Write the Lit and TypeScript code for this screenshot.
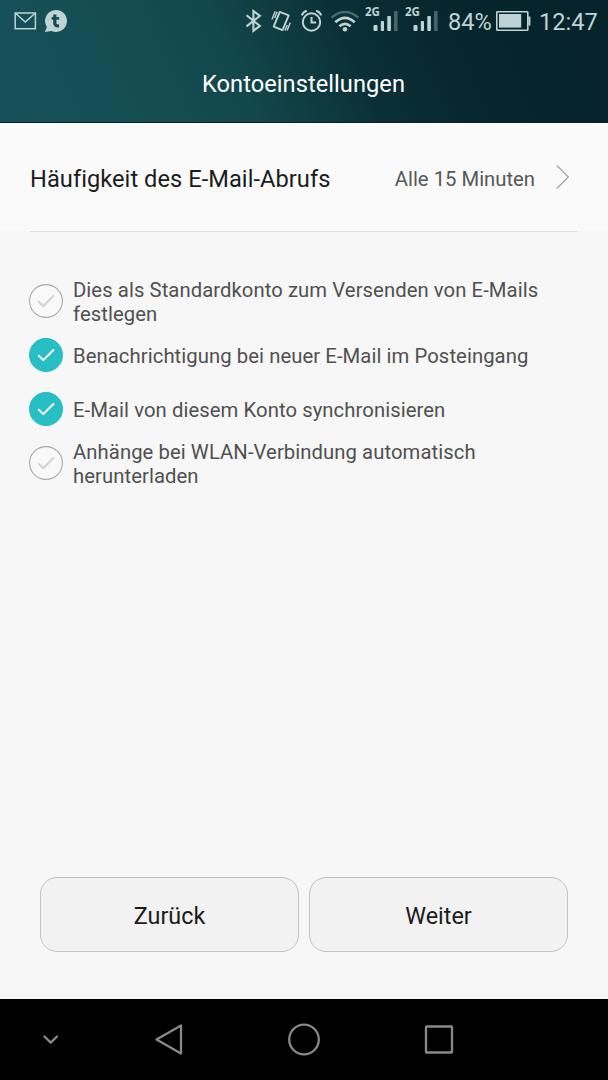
import { LitElement, html, css, svg } from "lit";
import { customElement, property } from "lit/decorators.js";
import { classMap } from "lit/directives/class-map.js";

@customElement("status-bar")
class StatusBar extends LitElement {
  static styles = css`
    :host { display: flex; height: 43px; align-items: flex-start; color: #bfd3d4; font-size: 24px; line-height: 28px; box-sizing: border-box; padding: 0 11px 0 14px; }
    svg { display: block; flex: none; height: 43px; }
    .spacer { flex: 1; }
    .label { padding-top: 8px; white-space: nowrap; }
    .percent { width: 47px; margin-left: 9px; font-size: 23.6px; }
    .clock { width: 58px; margin-left: 8px; font-size: 23.6px; text-align: right; }
    .net { font: 700 11.5px "Open Sans", Roboto, sans-serif; }
  `;
  signal() {
    return html`<svg width="34" height="43" viewBox="0 0 34 43" fill="currentColor">
      ${svg`<text class="net" x="0" y="16" textLength="15" lengthAdjust="spacingAndGlyphs">2G</text>
      <rect x="8.5" y="25" width="4" height="6" rx="1"/><rect x="15.8" y="21" width="3.2" height="10" rx=".8"/>
      <rect x="22.3" y="16" width="3.6" height="15" rx=".8"/><rect x="29" y="11" width="3.6" height="20" rx=".6" opacity=".35"/>`}
    </svg>`;
  }
  render() {
    return html`
      <svg width="24" viewBox="0 0 24 43" fill="none" stroke="currentColor" stroke-width="1.5">
        <rect x="1.2" y="13" width="20.2" height="15.7"/><path d="M1.5 13.3 11.3 22l9.8-8.7"/>
      </svg>
      <svg width="30" viewBox="38 0 30 43">
        <path fill="#bfd3d4" d="M56 10a11 11 0 1 1-4.6 21l-6.6 1.1 2.1-5A11 11 0 0 1 56 10Z"/>
        <path fill="none" stroke="#154b51" stroke-width="3.2" d="M54.8 14.6v8.7q0 3 4.2 2.6"/>
        <path fill="none" stroke="#154b51" stroke-width="2.6" d="M51.6 18.4h7.6"/>
      </svg>
      <div class="spacer"></div>
      <svg width="26" viewBox="244 0 26 43" fill="none" stroke="currentColor" stroke-width="2.1">
        <path d="m246.5 15.3 13.4 10.6-6.5 4.9V11l6.5 4.8-13.4 10.6"/>
      </svg>
      <svg width="30" viewBox="270 0 30 43" fill="none" stroke="currentColor" stroke-linejoin="round">
        <path stroke-width="1.9" d="m279.8 11.9 8.9 3.4-6.2 14.8-8.8-3.4Z"/>
        <path stroke-width="1.4" d="m271.9 19.5 3.3-8.2M274.6 18l2.6-6.2M287.3 25l-2.4 5.6M290.3 22.5l-3.2 8"/>
      </svg>
      <svg width="30" viewBox="300 0 30 43" fill="none" stroke="currentColor" stroke-width="2">
        <circle cx="311.5" cy="22" r="8.7"/><path d="M311.5 17v5.5h4.6M301.8 15.4q1.3-3.4 5-4.6M321.2 15.4q-1.3-3.4-5-4.6"/>
      </svg>
      <svg width="35" viewBox="330 0 35 43" fill="none" stroke="currentColor" stroke-width="2.4">
        <path opacity=".35" d="M331.6 17.6q13.3-11 26.8 0"/>
        <path stroke-width="2.8" d="M335.3 22.2q9.7-8.6 19.4 0M339.4 26.3q5.6-4.8 11.2 0"/>
        <circle cx="345" cy="29.3" r="2.3" fill="currentColor" stroke="none"/>
      </svg>
      ${this.signal()}
      <svg width="6.5" viewBox="0 0 6.5 43"></svg>
      ${this.signal()}
      <div class="label percent">84%</div>
      <svg width="36" viewBox="495 0 36 43" fill="currentColor">
        <rect x="496.8" y="11.7" width="31" height="18.6" rx=".6" fill="none" stroke="currentColor" stroke-width="1.6"/>
        <rect x="499" y="14" width="22.2" height="13.6"/><rect x="528.4" y="16.5" width="2" height="9"/>
      </svg>
      <div class="label clock">12:47</div>`;
  }
}

@customElement("check-row")
class CheckRow extends LitElement {
  @property({ type: Boolean }) checked = false;
  @property() label = "";
  static styles = css`
    :host { display: grid; grid-template-columns: 34px 1fr; column-gap: 10px; align-items: center; height: 54px; color: #505050; font-size: 20.27px; line-height: 23.7px; letter-spacing: 0.07px; }
    svg { display: block; }
    .ring { fill: #f9f9f9; stroke: #a9a9a9; stroke-width: 1.1; }
    .tick { fill: none; stroke: #d6d6d6; stroke-width: 2.3; stroke-linecap: round; stroke-linejoin: round; }
    .on .ring { fill: #27bfc3; stroke: #27bfc3; }
    .on .tick { stroke: #fff; stroke-width: 2; }
    .text { padding-top: 4px; }
  `;
  render() {
    return html`
      <svg class=${classMap({ on: this.checked })} width="34" height="34" viewBox="0 0 34 34">
        <circle class="ring" cx="17" cy="17" r="16.4"/><path class="tick" d="m9.8 17.7 4.5 4.4L24.4 12"/>
      </svg>
      <div class="text">${this.label}</div>`;
  }
}

@customElement("app-root")
class AppRoot extends LitElement {
  static styles = css`
    :host { display: flex; flex-direction: column; height: 1080px; width: 608px; background: #f7f7f7; font-family: Roboto, sans-serif; overflow: hidden; }
    .header { height: 123px; flex: none; box-sizing: border-box; border-bottom: 1px solid #092328; background: linear-gradient(66deg, #16505a 0%, #154d52 26%, #12474b 39%, #0a3037 58%, #07252d 75%, #06232b 100%); }
    .title { text-align: center; color: #fff; font-size: 23.64px; letter-spacing: 0.05px; line-height: 28px; padding-top: 27px; margin-right: 1px; }
    .setting { display: flex; align-items: center; height: 108px; background: #fafafa; padding: 0 38px 0 30px; flex: none; }
    .name { flex: 1; font-size: 23.64px; letter-spacing: 0.05px; color: #1c1c1c; padding-top: 3px; }
    .value { font-size: 20.27px; color: #575757; padding-top: 3px; margin-right: 20px; }
    .rule { height: 1px; flex: none; background: #dedede; margin: 0 31px 0 30px; }
    .list { flex: 1; padding: 42px 40px 0 29px; }
    .actions { display: grid; grid-template-columns: 1fr 1fr; gap: 10px; padding: 0 40px 47px; flex: none; }
    .button { height: 75px; box-sizing: border-box; border: 1px solid #c3c3c3; border-radius: 17px; background: #f2f2f2; color: #1c1c1c; font: 23.4px Roboto, sans-serif; padding: 2px 0 0; }
    .nav { height: 81px; flex: none; background: #000; }
    .nav svg { display: block; }
  `;
  render() {
    const rows = [
      { label: "Dies als Standardkonto zum Versenden von E-Mails festlegen", checked: false },
      { label: "Benachrichtigung bei neuer E-Mail im Posteingang", checked: true },
      { label: "E-Mail von diesem Konto synchronisieren", checked: true },
      { label: "Anhänge bei WLAN-Verbindung automatisch herunterladen", checked: false },
    ];
    return html`
      <div class="header"><status-bar></status-bar><div class="title">Kontoeinstellungen</div></div>
      <div class="setting">
        <div class="name">Häufigkeit des E-Mail-Abrufs</div>
        <div class="value">Alle 15 Minuten</div>
        <svg width="15" height="26" viewBox="0 0 15 26" fill="none" stroke="#a3a3a3" stroke-width="1.2"><path d="M1.8 1.5 13.4 13 1.8 24.5"/></svg>
      </div>
      <div class="rule"></div>
      <div class="list">${rows.map((r) => html`<check-row .label=${r.label} .checked=${r.checked}></check-row>`)}</div>
      <div class="actions"><button class="button">Zurück</button><button class="button">Weiter</button></div>
      <div class="nav">
        <svg width="608" height="81" viewBox="0 999 608 81" fill="none" stroke="#898989" stroke-width="2.3" stroke-linecap="round" stroke-linejoin="round">
          <path d="m44.4 1036.5 6.3 6.1 6.3-6.1"/>
          <path d="M156.5 1039.5 181 1025.5v28Z"/>
          <circle cx="304" cy="1039.5" r="14.8"/>
          <rect x="426" y="1026.5" width="26" height="26" rx=".5"/>
        </svg>
      </div>`;
  }
}
